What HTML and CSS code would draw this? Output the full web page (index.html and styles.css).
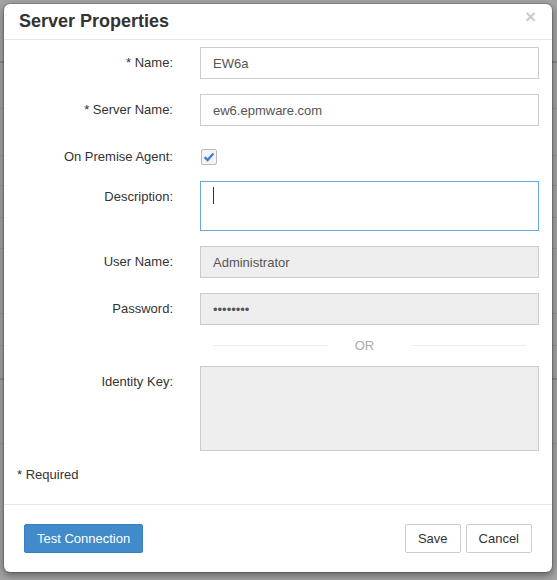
FILE: index.html
```html
<!DOCTYPE html>
<html lang="en">
<head>
  <meta charset="UTF-8" />
  <meta name="viewport" content="width=device-width, initial-scale=1.0"/>
  <title>Server Properties</title>
  <link rel="stylesheet" href="styles.css">
</head>
<body>
  <div class="modal">
    <div class="modal-header">
      <h4 class="modal-title">Server Properties</h4>
      <button class="close" type="button">&times;</button>
    </div>

    <div class="modal-body">
      <div class="form-row">
        <label class="form-label">* Name:</label>
        <input class="form-control" type="text" value="EW6a">
      </div>

      <div class="form-row">
        <label class="form-label">* Server Name:</label>
        <input class="form-control" type="text" value="ew6.epmware.com">
      </div>

      <div class="form-row">
        <label class="form-label">On Premise Agent:</label>
        <div>
          <span class="check">
            <svg width="14" height="14" viewBox="0 0 14 14"><path d="M2.6 7.2 L5.6 10 L11.4 3.6" fill="none" stroke="#3a7fcf" stroke-width="2.3"/></svg>
          </span>
        </div>
      </div>

      <div class="form-row">
        <label class="form-label">Description:</label>
        <div class="form-control textarea focused"><span class="caret"></span></div>
      </div>

      <div class="form-row">
        <label class="form-label">User Name:</label>
        <input class="form-control" type="text" value="Administrator" disabled>
      </div>

      <div class="form-row">
        <label class="form-label">Password:</label>
        <input class="form-control" type="password" value="password" disabled>
      </div>

      <div class="or-row">
        <span></span>
        <div class="or-divider"><span class="or-line"></span><span class="or-text">OR</span><span class="or-line"></span></div>
      </div>

      <div class="form-row">
        <label class="form-label">Identity Key:</label>
        <div class="form-control textarea key"></div>
      </div>

      <p class="required-note">* Required</p>
    </div>

    <div class="modal-footer">
      <button class="btn btn-primary" type="button">Test Connection</button>
      <div class="footer-right">
        <button class="btn btn-default" type="button">Save</button>
        <button class="btn btn-default" type="button">Cancel</button>
      </div>
    </div>
  </div>
</body>
</html>
```

FILE: styles.css
```css
body {
  margin: 0;
  padding: 0;
  font-family: "Liberation Sans", Arial, sans-serif;
  font-size: 13px;
  color: #333;
  background-color: #a4a4a4;
  background-image:
    linear-gradient(#8a8a8a, #8a8a8a),
    linear-gradient(#999, #999),
    linear-gradient(#999, #999),
    linear-gradient(#999, #999),
    linear-gradient(#999, #999),
    linear-gradient(#999, #999),
    linear-gradient(#999, #999),
    linear-gradient(#999, #999),
    linear-gradient(#8a8a8a, #8a8a8a),
    linear-gradient(#999, #999);
  background-size: 100% 2px, 100% 1px, 100% 1px, 100% 1px, 100% 1px, 100% 1px, 100% 1px, 100% 1px, 100% 2px, 100% 1px;
  background-position: 0 61px, 0 108px, 0 155px, 0 185px, 0 217px, 0 248px, 0 313px, 0 345px, 0 378px, 0 443px;
  background-repeat: no-repeat;
  height: 580px;
  overflow: hidden;
}

.modal {
  width: 548px;
  margin: 4px 0 0 4px;
  background: #fff;
  border-radius: 6px;
  box-shadow: 0 0 0 1px rgba(0,0,0,0.15), 0 3px 9px rgba(0,0,0,0.45);
}

.modal-header {
  display: flex;
  justify-content: space-between;
  align-items: flex-start;
  padding: 7px 15px 8px;
  border-bottom: 1px solid #e5e5e5;
}

.modal-title {
  margin: 0;
  font-size: 18px;
  line-height: 20px;
  font-weight: bold;
  color: #333;
}

.close {
  margin-top: -5px;
  margin-right: 1px;
  padding: 0;
  border: none;
  background: none;
  font-family: "Liberation Sans", Arial, sans-serif;
  font-size: 19px;
  font-weight: bold;
  line-height: 21px;
  color: #000;
  opacity: 0.2;
  cursor: pointer;
}

.modal-body {
  padding: 7px 13px 20px;
}

.form-row,
.or-row {
  display: grid;
  grid-template-columns: 156px 1fr;
  column-gap: 27px;
  margin-bottom: 15px;
}

.form-label {
  padding-top: 7px;
  line-height: 18px;
  text-align: right;
  color: #333;
}

.form-control {
  display: block;
  box-sizing: border-box;
  width: 100%;
  height: 32px;
  margin: 0;
  padding: 0 12px;
  border: 1px solid #ccc;
  border-radius: 0;
  background: #fff;
  font-family: "Liberation Sans", Arial, sans-serif;
  font-size: 13px;
  color: #555;
  outline: none;
}

.form-control:disabled {
  background: #eee;
  color: #555;
  -webkit-text-fill-color: #555;
  opacity: 1;
}

.textarea {
  height: 50px;
  padding-top: 5px;
}

.textarea.focused {
  border-color: #6aa8dc;
}

.textarea.key {
  height: 85px;
  background: #eee;
}

.caret {
  display: block;
  width: 1px;
  height: 17px;
  background: #333;
}

.check {
  display: flex;
  align-items: center;
  justify-content: center;
  box-sizing: border-box;
  width: 16px;
  height: 16px;
  margin: 8px 0 0 1px;
  border: 1px solid #bbb;
  border-radius: 2px;
  background: #f4f4f4;
}

.or-divider {
  display: flex;
  align-items: center;
  padding: 0 13px;
  height: 11px;
}

.or-line {
  flex: 1;
  height: 1px;
  background: #eee;
}

.or-text {
  padding: 0 37px 0 27px;
  color: #aaa;
  font-size: 13px;
}

.required-note {
  margin: 0;
  line-height: 18px;
  color: #333;
}

.modal-footer {
  display: flex;
  justify-content: space-between;
  padding: 19px 20px;
  border-top: 1px solid #e5e5e5;
}

.footer-right {
  display: flex;
  gap: 5px;
}

.btn {
  height: 29px;
  padding: 0 12px;
  border: 1px solid transparent;
  border-radius: 2px;
  font-family: "Liberation Sans", Arial, sans-serif;
  font-size: 13px;
  cursor: pointer;
}

.btn-primary {
  background: #428bca;
  border-color: #3b80bd;
  color: #fff;
}

.btn-default {
  background: #fff;
  border-color: #ccc;
  color: #333;
}
```
